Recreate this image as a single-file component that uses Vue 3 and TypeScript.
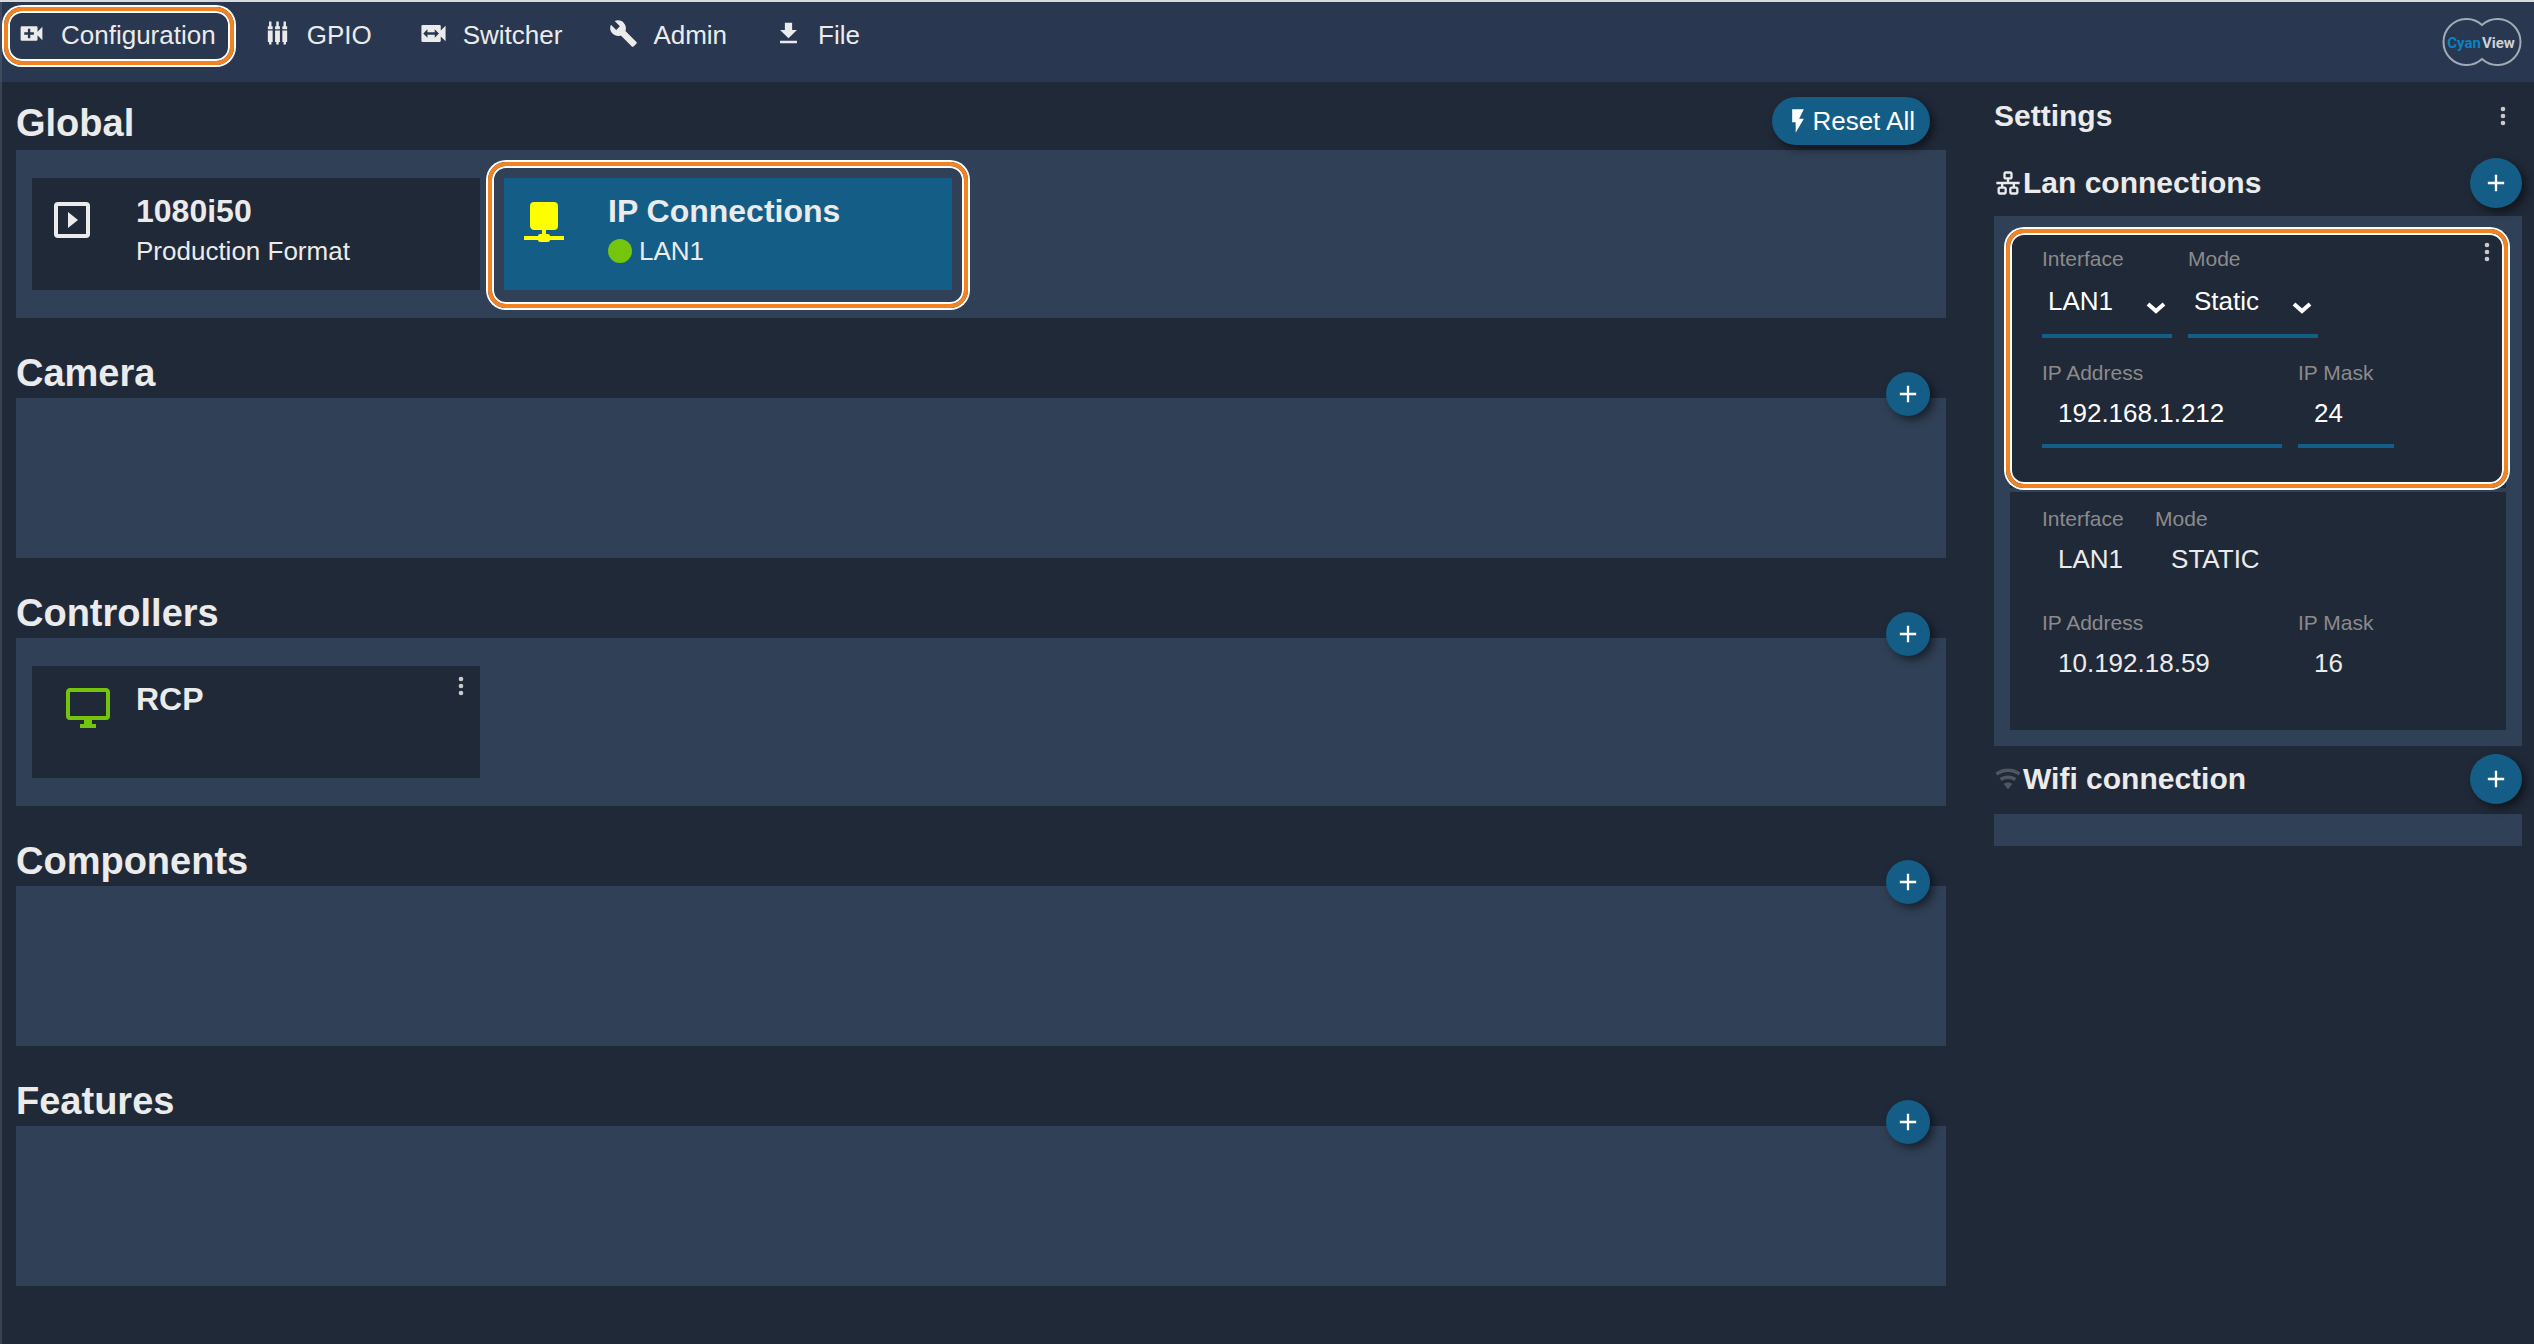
<script setup lang="ts">
import { ref } from 'vue'

interface NavItem {
  id: string
  label: string
  path: string
}

interface Card {
  title: string
  subtitle?: string
  status?: boolean
  icon: string
  tone: 'light' | 'yellow' | 'green'
  active?: boolean
  indented?: boolean
  menu?: boolean
}

interface Section {
  title: string
  cards: Card[]
  reset?: boolean
}

const icons = {
  videoPlus:
    'M14,13H11V16H9V13H6V11H9V8H11V11H14M17,10.5V7A1,1 0 0,0 16,6H4A1,1 0 0,0 3,7V17A1,1 0 0,0 4,18H16A1,1 0 0,0 17,17V13.5L21,17.5V6.5L17,10.5Z',
  gpio:
    'M5,2H7V6H8V19H7V21H5V19H4V6H5ZM11,2H13V6H14V19H13V21H11V19H10V6H11ZM17,2H19V6H20V19H19V21H17V19H16V6H17ZM4,8.5V9.5H8V8.5ZM10,8.5V9.5H14V8.5ZM16,8.5V9.5H20V8.5Z',
  videoSwitch:
    'M13,15.5V13H7V15.5L3.5,12L7,8.5V11H13V8.5L16.5,12M18,9.5V6A1,1 0 0,0 17,5H3A1,1 0 0,0 2,6V18A1,1 0 0,0 3,19H17A1,1 0 0,0 18,18V14.5L22,18.5V5.5L18,9.5Z',
  wrench:
    'M22.7,19L13.6,9.9C14.5,7.6 14,4.9 12.1,3C10.1,1 7.1,0.6 4.7,1.7L9,6L6,9L1.6,4.7C0.4,7.1 0.9,10.1 2.9,12.1C4.8,14 7.5,14.5 9.8,13.6L18.9,22.7C19.3,23.1 19.9,23.1 20.3,22.7L22.6,20.4C23.1,20 23.1,19.3 22.7,19Z',
  download: 'M5,20H19V18H5M19,9H15V3H9V9H5L12,16L19,9Z',
  flash: 'M7,2V13H10V22L17,10H13L17,2H7Z',
  plus: 'M19,13H13V19H11V13H5V11H11V5H13V11H19V13Z',
  dots:
    'M12,16A2,2 0 1,1 12,20A2,2 0 1,1 12,16M12,10A2,2 0 1,1 12,14A2,2 0 1,1 12,10M12,4A2,2 0 1,1 12,8A2,2 0 1,1 12,4Z',
  playBox:
    'M19,19H5V5H19M19,3H5A2,2 0 0,0 3,5V19A2,2 0 0,0 5,21H19A2,2 0 0,0 21,19V5A2,2 0 0,0 19,3M10,8V16L15,12Z',
  network:
    'M17,3A2,2 0 0,1 19,5V15A2,2 0 0,1 17,17H13V19H14A1,1 0 0,1 15,20H22V22H15A1,1 0 0,1 14,23H10A1,1 0 0,1 9,22H2V20H9A1,1 0 0,1 10,19H11V17H7C5.89,17 5,16.1 5,15V5A2,2 0 0,1 7,3H17Z',
  monitor:
    'M21,16H3V4H21M21,2H3C1.89,2 1,2.89 1,4V16A2,2 0 0,0 3,18H10V20H8V22H16V20H14V18H21A2,2 0 0,0 23,16V4C23,2.89 22.1,2 21,2Z',
  lan:
    'M10,2C8.89,2 8,2.89 8,4V7C8,8.11 8.89,9 10,9H11V11H2V13H6V15H5C3.89,15 3,15.89 3,17V20C3,21.11 3.89,22 5,22H9C10.11,22 11,21.11 11,20V17C11,15.89 10.11,15 9,15H8V13H16V15H15C13.89,15 13,15.89 13,17V20C13,21.11 13.89,22 15,22H19C20.11,22 21,21.11 21,20V17C21,15.89 20.11,15 19,15H18V13H22V11H13V9H14C15.11,9 16,8.11 16,7V4C16,2.89 15.11,2 14,2H10M10,4H14V7H10V4M5,17H9V20H5V17M15,17H19V20H15V17Z',
  wifi:
    'M12,21L15.6,16.2C14.6,15.45 13.35,15 12,15C10.65,15 9.4,15.45 8.4,16.2L12,21M12,3C7.95,3 4.21,4.34 1.2,6.6L3,9C5.5,7.12 8.62,6 12,6C15.38,6 18.5,7.12 21,9L22.8,6.6C19.79,4.34 16.05,3 12,3M12,9C9.3,9 6.81,9.89 4.8,11.4L6.6,13.8C8.1,12.67 9.97,12 12,12C14.03,12 15.9,12.67 17.4,13.8L19.2,11.4C17.19,9.89 14.7,9 12,9Z',
}

const nav: NavItem[] = [
  { id: 'configuration', label: 'Configuration', path: icons.videoPlus },
  { id: 'gpio', label: 'GPIO', path: icons.gpio },
  { id: 'switcher', label: 'Switcher', path: icons.videoSwitch },
  { id: 'admin', label: 'Admin', path: icons.wrench },
  { id: 'file', label: 'File', path: icons.download },
]

const current = ref('configuration')

const sections: Section[] = [
  {
    title: 'Global',
    reset: true,
    cards: [
      { title: '1080i50', subtitle: 'Production Format', icon: icons.playBox, tone: 'light' },
      { title: 'IP Connections', subtitle: 'LAN1', status: true, icon: icons.network, tone: 'yellow', active: true },
    ],
  },
  { title: 'Camera', cards: [] },
  {
    title: 'Controllers',
    cards: [{ title: 'RCP', icon: icons.monitor, tone: 'green', indented: true, menu: true }],
  },
  { title: 'Components', cards: [] },
  { title: 'Features', cards: [] },
]

const lanInterface = ref('LAN1')
const lanMode = ref('Static')
const lanAddress = ref('192.168.1.212')
const lanMask = ref('24')
</script>

<template>
  <div class="app">
    <header class="topbar">
      <nav class="nav">
        <a
          v-for="item in nav"
          :key="item.id"
          :href="'#' + item.id"
          class="nav-item"
          :class="{ current: item.id === current }"
          @click.prevent="current = item.id"
        >
          <svg class="nav-icon" viewBox="0 0 24 24"><path fill-rule="evenodd" :d="item.path" /></svg>
          <span>{{ item.label }}</span>
        </a>
      </nav>
      <svg class="logo" viewBox="0 0 80 48" role="img" aria-label="CyanView">
        <path
          d="M40,7A23,23 0 1,0 40,41A23,23 0 1,0 40,7Z"
          fill="none"
          stroke="#a3aab6"
          stroke-width="2"
        />
        <text x="39" y="30" text-anchor="end" fill="#0b82c4">Cyan</text>
        <text x="40" y="30" fill="#ced1d6">View</text>
      </svg>
    </header>

    <div class="body">
      <main class="main">
        <section v-for="section in sections" :key="section.title" class="section">
          <div class="section-head">
            <h2>{{ section.title }}</h2>
            <button v-if="section.reset" type="button" class="reset">
              <svg class="icon" viewBox="0 0 24 24"><path :d="icons.flash" /></svg>
              <span>Reset All</span>
            </button>
            <button v-else type="button" class="add" :aria-label="'Add ' + section.title">
              <svg class="icon" viewBox="0 0 24 24"><path :d="icons.plus" /></svg>
            </button>
          </div>
          <div class="panel">
            <article v-for="card in section.cards" :key="card.title" class="card" :class="{ active: card.active }">
              <div class="card-icon" :class="[card.tone, { indented: card.indented }]">
                <svg viewBox="0 0 24 24"><path :d="card.icon" /></svg>
              </div>
              <div class="card-text">
                <h3>{{ card.title }}</h3>
                <p v-if="card.subtitle">
                  <i v-if="card.status" class="dot"></i>
                  <span>{{ card.subtitle }}</span>
                </p>
              </div>
              <button v-if="card.menu" type="button" class="kebab corner" aria-label="Card menu">
                <svg class="icon" viewBox="0 0 24 24"><path :d="icons.dots" /></svg>
              </button>
            </article>
          </div>
        </section>
      </main>

      <aside class="side">
        <div class="side-title">
          <h2>Settings</h2>
          <button type="button" class="kebab" aria-label="Settings menu">
            <svg class="icon" viewBox="0 0 24 24"><path :d="icons.dots" /></svg>
          </button>
        </div>

        <div class="side-head">
          <svg class="icon" viewBox="0 0 24 24"><path fill-rule="evenodd" :d="icons.lan" /></svg>
          <h3>Lan connections</h3>
          <button type="button" class="add large" aria-label="Add lan connection">
            <svg class="icon" viewBox="0 0 24 24"><path :d="icons.plus" /></svg>
          </button>
        </div>
        <div class="side-panel">
          <form class="conn selected" @submit.prevent>
            <div class="row">
              <div class="field short">
                <label for="lan-interface">Interface</label>
                <div class="select">
                  <select id="lan-interface" v-model="lanInterface">
                    <option>LAN1</option>
                  </select>
                  <svg viewBox="0 0 20 12"><path d="M2,2L10,9L18,2" /></svg>
                </div>
              </div>
              <div class="field short">
                <label for="lan-mode">Mode</label>
                <div class="select">
                  <select id="lan-mode" v-model="lanMode">
                    <option>Static</option>
                    <option>DHCP</option>
                  </select>
                  <svg viewBox="0 0 20 12"><path d="M2,2L10,9L18,2" /></svg>
                </div>
              </div>
            </div>
            <div class="row">
              <div class="field address">
                <label for="lan-address">IP Address</label>
                <input id="lan-address" v-model="lanAddress" type="text" />
              </div>
              <div class="field mask">
                <label for="lan-mask">IP Mask</label>
                <input id="lan-mask" v-model="lanMask" type="text" />
              </div>
            </div>
            <button type="button" class="kebab corner" aria-label="Connection menu">
              <svg class="icon" viewBox="0 0 24 24"><path :d="icons.dots" /></svg>
            </button>
          </form>

          <div class="conn readonly">
            <dl class="row">
              <div class="field">
                <dt>Interface</dt>
                <dd>LAN1</dd>
              </div>
              <div class="field">
                <dt>Mode</dt>
                <dd>STATIC</dd>
              </div>
            </dl>
            <dl class="row">
              <div class="field address">
                <dt>IP Address</dt>
                <dd>10.192.18.59</dd>
              </div>
              <div class="field mask">
                <dt>IP Mask</dt>
                <dd>16</dd>
              </div>
            </dl>
          </div>
        </div>

        <div class="side-head wifi">
          <svg class="icon" viewBox="0 0 24 24"><path :d="icons.wifi" /></svg>
          <h3>Wifi connection</h3>
          <button type="button" class="add large" aria-label="Add wifi connection">
            <svg class="icon" viewBox="0 0 24 24"><path :d="icons.plus" /></svg>
          </button>
        </div>
        <div class="side-panel"></div>
      </aside>
    </div>
  </div>
</template>

<style>
body {
  background: #202938;
}
</style>

<style scoped>
.app {
  box-sizing: border-box;
  min-height: 100vh;
  border-top: 2px solid #d8dadd;
  background: #202938;
  color: #ebebeb;
  font-family: "Liberation Sans", Arial, sans-serif;
  font-size: 26px;
  box-shadow: inset 2px 0 0 #3a4253;
}

h2,
h3,
p,
dl,
dd {
  margin: 0;
}

svg {
  display: block;
  flex: none;
  fill: currentColor;
}

button {
  border: 0;
  padding: 0;
  background: none;
  color: inherit;
  font: inherit;
  cursor: pointer;
}

.icon {
  width: 28px;
  height: 28px;
}

.topbar {
  display: flex;
  justify-content: space-between;
  align-items: flex-start;
  box-sizing: border-box;
  height: 80px;
  padding: 16px 12px 0 17px;
  background: #293850;
  box-shadow: inset 2px 0 0 #3f4b60;
}

.nav {
  display: flex;
  gap: 47px;
}

.nav-item {
  position: relative;
  display: flex;
  gap: 15px;
  margin-top: 1px;
  color: inherit;
  line-height: 32px;
  text-decoration: none;
}

.nav-icon {
  width: 29px;
  height: 29px;
}

.nav-item.current::after,
.card.active::after,
.conn.selected::after {
  content: "";
  position: absolute;
  border: 4px solid #f28322;
  border-radius: 18px;
  box-shadow: 0 0 0 2px #fff, inset 0 0 0 2px #fff;
  pointer-events: none;
}

.nav-item.current::after {
  inset: -12px -18px -14px -13px;
}

.logo {
  width: 80px;
  height: 48px;
}

.logo text {
  font: bold 15px Roboto, "Liberation Sans", sans-serif;
}

.body {
  display: flex;
  gap: 48px;
  padding: 0 12px 56px 16px;
}

.main {
  flex: 1;
  min-width: 0;
}

.section-head {
  display: flex;
  justify-content: space-between;
  align-items: flex-end;
  box-sizing: border-box;
  height: 80px;
  padding: 0 16px 3px 0;
}

.section:first-child .section-head {
  height: 68px;
  padding-bottom: 5px;
}

.section-head h2 {
  font-size: 38px;
  line-height: 44px;
}

.reset,
.add {
  display: flex;
  align-items: center;
  justify-content: center;
  background: #145d87;
  color: #fff;
  box-shadow: 4px 4px 8px rgba(0, 0, 0, 0.5);
}

.reset {
  height: 48px;
  padding: 0 15px 0 12px;
  border-radius: 24px;
}

.add {
  position: relative;
  width: 44px;
  height: 44px;
  margin-bottom: -21px;
  border-radius: 50%;
}

.add.large {
  width: 52px;
  height: 50px;
  margin: 0 0 0 auto;
}

.panel {
  display: flex;
  gap: 24px;
  box-sizing: border-box;
  min-height: 160px;
  padding: 28px 16px;
  background: #304056;
}

.card {
  position: relative;
  display: flex;
  box-sizing: border-box;
  width: 448px;
  height: 112px;
  background: #202938;
}

.card.active {
  background: #145d87;
}

.card.active::after {
  inset: -16px -16px -18px;
}

.card-icon {
  box-sizing: border-box;
  width: 104px;
  padding: 18px 0 0 16px;
}

.card-icon.indented {
  padding-left: 32px;
}

.card-icon svg {
  width: 48px;
  height: 48px;
}

.yellow {
  color: #ff0;
}

.green {
  color: #76c50d;
}

.card-text {
  padding-top: 14px;
}

.card-text h3 {
  font-size: 32px;
  line-height: 38px;
}

.card-text p {
  display: flex;
  align-items: center;
  gap: 7px;
  margin-top: 4px;
  line-height: 34px;
}

.dot {
  width: 24px;
  height: 24px;
  border-radius: 50%;
  background: #76c50d;
}

.kebab {
  color: #c8cacd;
}

.kebab.corner {
  position: absolute;
  top: 6px;
  right: 5px;
}

.side {
  width: 528px;
}

.side h2,
.side h3 {
  font-size: 30px;
  line-height: 34px;
}

.side-title {
  display: flex;
  justify-content: space-between;
  align-items: center;
  height: 68px;
  padding-right: 5px;
}

.side-head {
  display: flex;
  align-items: center;
  gap: 1px;
  padding: 8px 0;
}

.side-head.wifi {
  padding-bottom: 10px;
}

.side-head.wifi > .icon {
  color: #4f565f;
}

.side-panel {
  display: flex;
  flex-direction: column;
  gap: 4px;
  padding: 16px;
  background: #304056;
}

.conn {
  position: relative;
  padding: 14px 32px 40px;
  background: #202938;
}

.conn.selected::after {
  inset: -3px -2px 0 -4px;
}

.row {
  display: flex;
  gap: 16px;
}

.row + .row {
  margin-top: 22px;
}

.readonly .row + .row {
  margin-top: 24px;
}

.short {
  width: 130px;
}

.address {
  width: 240px;
}

.mask {
  width: 96px;
}

label,
dt {
  display: block;
  color: #8b8b8b;
  font-size: 21px;
  line-height: 26px;
}

.select {
  position: relative;
}

select,
input {
  display: block;
  box-sizing: border-box;
  width: 100%;
  margin: 0;
  border: 0;
  border-bottom: 4px solid #145d87;
  border-radius: 0;
  background: transparent;
  color: #fff;
  font: inherit;
  outline: none;
  appearance: none;
}

select {
  height: 66px;
  padding: 0 28px 4px 6px;
}

input {
  height: 62px;
  padding: 0 8px 4px 16px;
}

.select svg {
  position: absolute;
  right: 6px;
  bottom: 24px;
  width: 20px;
  height: 12px;
  fill: none;
  stroke: #fff;
  stroke-width: 4;
  pointer-events: none;
}

dd {
  padding: 0 16px;
  line-height: 54px;
}
</style>
